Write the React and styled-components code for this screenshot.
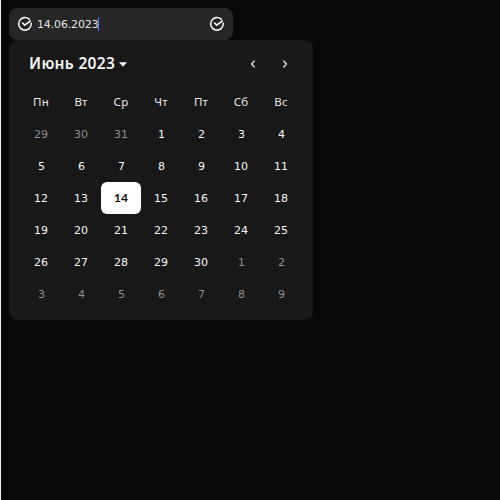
import React from "react";
import styled, { createGlobalStyle, css } from "styled-components";

const GlobalStyle = createGlobalStyle`
  * { box-sizing: border-box; }
  body { margin: 0; background: #080808; overflow: hidden; }
  button { border: 0; padding: 0; background: none; color: inherit; font: inherit; }
`;

const Page = styled.main`
  width: 500px;
  height: 500px;
  padding: 8px;
  border-left: 1px solid #f1f2f3;
  background: #080808;
  color: #f5f5f5;
  font-family: "Noto Sans", sans-serif;
  font-size: 12px;
`;

const Field = styled.div`
  display: flex;
  align-items: center;
  width: 224px;
  height: 32px;
  padding: 0 8px;
  border-radius: 8px;
  background: #262626;
`;

const FieldValue = styled.span`
  display: flex;
  align-items: center;
  flex: 1;
  padding-left: 4px;
  font-family: "DejaVu Sans", sans-serif;
  font-size: 11px;
  line-height: 18px;
  letter-spacing: -0.15px;
  color: #e4e4e4;
`;

const FieldText = styled.span`
  padding-top: 1px;
`;

const Caret = styled.i`
  width: 1px;
  height: 14px;
  background: #3f81fd;
`;

const Calendar = styled.section`
  width: 304px;
  height: 280px;
  padding: 8px 12px 10px;
  border-radius: 8px;
  background: #181818;
`;

const Header = styled.header`
  display: flex;
  align-items: center;
  height: 32px;
  padding-left: 8px;
`;

const Title = styled.button`
  display: flex;
  align-items: center;
  gap: 4px;
  font-size: 15.5px;
  font-weight: 600;
  line-height: 24px;
  letter-spacing: 0.32px;
  white-space: nowrap;
`;

const TitleText = styled.span`
  padding-bottom: 2px;
`;

const Nav = styled.nav`
  display: flex;
  margin-left: auto;
`;

const NavButton = styled.button`
  display: grid;
  place-items: center;
  width: 32px;
  height: 32px;
`;

const Grid = styled.div`
  display: grid;
  grid-template-columns: repeat(7, 40px);
  grid-auto-rows: 32px;
  padding-top: 6px;
`;

const Weekday = styled.span`
  display: grid;
  place-items: center;
  padding-bottom: 2px;
  font-size: 11.5px;
  letter-spacing: 0.2px;
  color: #e8e8e8;
`;

const Day = styled.button`
  display: grid;
  place-items: center;
  border-radius: 6px;
  && { font-family: "DejaVu Sans", sans-serif; font-size: 11px; line-height: 16px; padding: 2px 0 0 ${(p) => (p.$single ? "1px" : "0")}; }
  color: #f5f5f5;
  ${(p) => p.$muted && css`color: #8e8e8e;`}
  ${(p) => p.$selected && css`
    && { font-family: Lato, sans-serif; font-size: 12px; font-weight: 700; padding: 0 0 1px; }
    background: #fff;
    color: #101010;
  `}
`;

const CheckIcon = () => (
  <svg width="16" height="16" viewBox="0 0 16 16" fill="none" stroke="#f5f5f5" strokeWidth="1.6" strokeLinecap="round" strokeLinejoin="round">
    <path d="M12.2 3.1A6.3 6.3 0 1 0 14.3 7.4" />
    <path d="M5.5 7 7.8 9.1 13.3 5" />
  </svg>
);

const Chevron = ({ d }) => (
  <svg width="16" height="16" viewBox="0 0 16 16" fill="none" stroke="#e0e0e0" strokeWidth="1.3" strokeLinecap="round" strokeLinejoin="round">
    <path d={d} />
  </svg>
);

const weekdays = ["Пн", "Вт", "Ср", "Чт", "Пт", "Сб", "Вс"];
const days = [
  ...[29, 30, 31].map((n) => ({ n, muted: true })),
  ...Array.from({ length: 30 }, (_, i) => ({ n: i + 1, selected: i === 13 })),
  ...Array.from({ length: 9 }, (_, i) => ({ n: i + 1, muted: true })),
];

export default function App() {
  return (
    <>
      <GlobalStyle />
      <Page>
        <Field>
          <CheckIcon />
          <FieldValue><FieldText>14.06.2023</FieldText><Caret /></FieldValue>
          <CheckIcon />
        </Field>
        <Calendar>
          <Header>
            <Title>
              <TitleText>Июнь 2023</TitleText>
              <svg width="8" height="5" viewBox="0 0 8 5" fill="#f5f5f5"><path d="M.7.3h6.6q.7 0 .2.6L4.5 4.3q-.5.6-1 0L.5.9Q0 .3.7.3Z" /></svg>
            </Title>
            <Nav>
              <NavButton aria-label="Предыдущий месяц"><Chevron d="M9.3 5 6.5 8 9.3 11" /></NavButton>
              <NavButton aria-label="Следующий месяц"><Chevron d="M6.7 5 9.5 8 6.7 11" /></NavButton>
            </Nav>
          </Header>
          <Grid>
            {weekdays.map((d) => <Weekday key={d}>{d}</Weekday>)}
            {days.map((d, i) => <Day key={i} $muted={d.muted} $selected={d.selected} $single={d.n < 10}>{d.n}</Day>)}
          </Grid>
        </Calendar>
      </Page>
    </>
  );
}
